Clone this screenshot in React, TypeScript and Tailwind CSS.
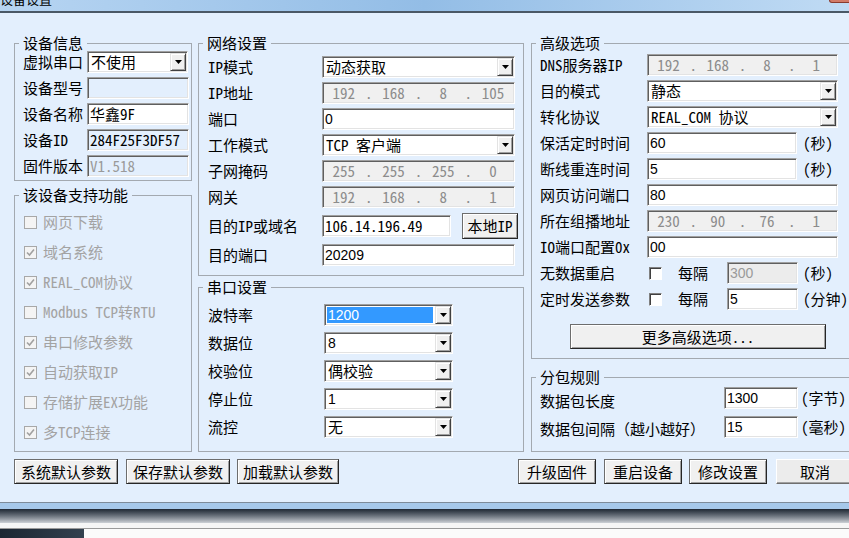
import React from 'react';

const MONO = "font-['Noto_Sans_Mono_CJK_SC','Noto_Sans_CJK_SC',sans-serif]";
const SANS = "font-['Liberation_Sans','DejaVu_Sans',sans-serif] text-[14px]";
const SUNKEN =
  'border border-t-[#a0a0a0] border-l-[#a0a0a0] border-b-white border-r-white shadow-[inset_1px_1px_0_#5f5f5f,inset_-1px_-1px_0_#e3e3e3] p-[1px]';
const RAISED =
  'border border-t-[#6d6d6d] border-l-[#6d6d6d] border-b-[#262626] border-r-[#262626] bg-[#f0f0f0] shadow-[inset_1px_1px_0_#fff,inset_-1px_-1px_0_#a0a0a0]';
const RAISED_SOFT =
  'border border-t-white border-l-white border-b-[#6f6f6f] border-r-[#6f6f6f] bg-[#ececec] shadow-[inset_-1px_-1px_0_#a0a0a0]';

const Arrow = () => (
  <svg width="7" height="4" viewBox="0 0 7 4">
    <path d="M0 0h7L3.5 4z" fill="#000" />
  </svg>
);

function Combo({
  value,
  className = '',
  sans = false,
  highlight = false,
}: {
  value: string;
  className?: string;
  sans?: boolean;
  highlight?: boolean;
}) {
  return (
    <div className={`flex h-[22px] shrink-0 bg-white ${SUNKEN} ${className}`}>
      <div className="flex min-w-0 flex-1 py-[1px] pl-[1px] pr-[2px]">
        <span
          className={`flex flex-1 items-center whitespace-pre pl-[1px] ${highlight ? 'bg-[#3399ff] text-white' : ''} ${sans ? SANS : ''}`}
        >
          {value}
        </span>
      </div>
      <div className="flex w-[16px] items-center justify-center border border-t-[#e3e3e3] border-l-[#e3e3e3] border-b-[#404040] border-r-[#404040] bg-[#f0f0f0] shadow-[inset_1px_1px_0_#fff,inset_-1px_-1px_0_#a0a0a0]">
        <Arrow />
      </div>
    </div>
  );
}

function Edit({
  value = '',
  className = '',
  bg = 'bg-white',
  sans = false,
  gray = false,
}: {
  value?: string;
  className?: string;
  bg?: string;
  sans?: boolean;
  gray?: boolean;
}) {
  return (
    <div
      className={`flex h-[22px] shrink-0 items-center whitespace-pre pl-[2px] ${SUNKEN} ${bg} ${sans ? SANS : ''} ${gray ? 'text-[#9a9a9a]' : 'text-black'} ${className}`}
    >
      {value}
    </div>
  );
}

function IpBox({ parts, className = '' }: { parts: string[]; className?: string }) {
  return (
    <div className={`flex h-[22px] shrink-0 items-center bg-[#f0f0f0] text-[#8c8c8c] ${SUNKEN} ${className}`}>
      {parts.map((p, i) => (
        <React.Fragment key={i}>
          {i > 0 && <span className="w-[10px] text-center">.</span>}
          <span className="flex-1 text-center">{p}</span>
        </React.Fragment>
      ))}
    </div>
  );
}

function Check({ checked = false, disabled = false }: { checked?: boolean; disabled?: boolean }) {
  return (
    <span
      className={`flex h-[13px] w-[13px] shrink-0 items-center justify-center ${
        disabled
          ? 'border border-[#a8a8a8] bg-[#f4f4f4]'
          : 'border border-t-[#808080] border-l-[#808080] border-b-white border-r-white bg-white shadow-[inset_1px_1px_0_#404040]'
      }`}
    >
      {checked && (
        <svg width="9" height="9" viewBox="0 0 9 9">
          <path d="M1 4.5 3.5 7 8 1.5" stroke="#a0a0a0" strokeWidth="1.6" fill="none" />
        </svg>
      )}
    </span>
  );
}

function Group({
  title,
  className = '',
  children,
}: {
  title: string;
  className?: string;
  children: React.ReactNode;
}) {
  return (
    <fieldset className={`min-w-0 border border-[#a3a9b0] ${className}`}>
      <legend className="ml-[4px] h-[16px] px-[4px] leading-[16px]">{title}</legend>
      {children}
    </fieldset>
  );
}

const Btn = ({ label, className = '', soft = false }: { label: string; className?: string; soft?: boolean }) => (
  <button
    type="button"
    className={`flex h-[25px] shrink-0 items-center justify-center text-black ${soft ? RAISED_SOFT : RAISED} ${className}`}
  >
    {label}
  </button>
);

const features: [string, boolean][] = [
  ['网页下载', false],
  ['域名系统', true],
  ['REAL_COM协议', true],
  ['Modbus TCP转RTU', false],
  ['串口修改参数', true],
  ['自动获取IP', true],
  ['存储扩展EX功能', false],
  ['多TCP连接', true],
];

export default function App() {
  return (
    <div className={`flex h-[538px] w-[849px] flex-col overflow-hidden bg-[#e3effd] text-[15px] leading-[16px] text-black ${MONO}`}>
      {/* title bar, mostly cut off */}
      <div className="flex h-[11px] shrink-0 overflow-hidden bg-linear-to-r from-[#b7d5f2] via-[#93bde6] to-[#c0dbf4]">
        <span className="-mt-[9px] text-[13px] leading-[16px]">设备设置</span>
        <div className="ml-auto mr-[-4px] h-[3px] w-[24px] rounded-bl-[4px] border border-t-0 border-[#8a3b2e] bg-[#d27b68]" />
      </div>
      <div className="h-[2px] shrink-0 bg-[#4a5866]" />

      <div className="flex h-[489px] shrink-0 flex-col pl-[14px] pt-[22px]">
        <div className="flex">
          {/* left column */}
          <div className="flex w-[178px] shrink-0 flex-col">
            <Group title="设备信息">
              <div className="flex flex-col gap-[4px] pb-[3px] pl-[8px]">
                <div className="flex h-[22px] items-center">
                  <span className="w-[64px] shrink-0">虚拟串口</span>
                  <Combo value="不使用" className="w-[101px]" />
                </div>
                <div className="flex h-[22px] items-center">
                  <span className="w-[64px] shrink-0">设备型号</span>
                  <Edit className="w-[102px]" bg="bg-[#e3effd]" />
                </div>
                <div className="flex h-[22px] items-center">
                  <span className="w-[64px] shrink-0">设备名称</span>
                  <Edit value="华鑫9F" className="w-[102px]" />
                </div>
                <div className="flex h-[22px] items-center">
                  <span className="w-[64px] shrink-0">设备ID</span>
                  <Edit value="284F25F3DF57" className="w-[102px] overflow-hidden" bg="bg-[#e3effd]" />
                </div>
                <div className="flex h-[22px] items-center">
                  <span className="w-[64px] shrink-0">固件版本</span>
                  <Edit value="V1.518" className="w-[102px]" bg="bg-[#e3effd]" gray />
                </div>
              </div>
            </Group>

            <Group title="该设备支持功能" className="mt-[6px]">
              <div className="flex flex-col pb-[4px] pl-[9px] pt-[4px] text-[#a3a3a3]">
                {features.map(([name, on]) => (
                  <div key={name} className="flex h-[30px] items-center gap-[6px]">
                    <Check checked={on} disabled />
                    <span className="whitespace-pre">{name}</span>
                  </div>
                ))}
              </div>
            </Group>
          </div>

          {/* middle column */}
          <div className="ml-[6px] flex w-[326px] shrink-0 flex-col">
            <Group title="网络设置">
              <div className="flex flex-col gap-[4px] pb-[9px] pl-[9px] pt-[5px]">
                <div className="flex h-[22px] items-center">
                  <span className="w-[114px] shrink-0">IP模式</span>
                  <Combo value="动态获取" className="w-[193px]" />
                </div>
                <div className="flex h-[22px] items-center">
                  <span className="w-[114px] shrink-0">IP地址</span>
                  <IpBox parts={['192', '168', '8', '105']} className="w-[193px]" />
                </div>
                <div className="flex h-[22px] items-center">
                  <span className="w-[114px] shrink-0">端口</span>
                  <Edit value="0" className="w-[193px]" sans />
                </div>
                <div className="flex h-[22px] items-center">
                  <span className="w-[114px] shrink-0">工作模式</span>
                  <Combo value="TCP 客户端" className="w-[193px]" />
                </div>
                <div className="flex h-[22px] items-center">
                  <span className="w-[114px] shrink-0">子网掩码</span>
                  <IpBox parts={['255', '255', '255', '0']} className="w-[193px]" />
                </div>
                <div className="flex h-[22px] items-center">
                  <span className="w-[114px] shrink-0">网关</span>
                  <IpBox parts={['192', '168', '8', '1']} className="w-[193px]" />
                </div>
                <div className="mt-[1px] flex h-[26px] items-center">
                  <span className="w-[114px] shrink-0">目的IP或域名</span>
                  <Edit value="106.14.196.49" className="w-[129px]" />
                  <Btn label="本地IP" className="ml-[11px] h-[26px] w-[56px]" />
                </div>
                <div className="mt-[1px] flex h-[22px] items-center">
                  <span className="w-[114px] shrink-0">目的端口</span>
                  <Edit value="20209" className="w-[193px]" sans />
                </div>
              </div>
            </Group>

            <Group title="串口设置" className="mt-[3px]">
              <div className="flex flex-col gap-[6px] pb-[13px] pl-[9px] pt-[9px]">
                <div className="flex h-[22px] items-center">
                  <span className="w-[116px] shrink-0">波特率</span>
                  <Combo value="1200" className="w-[129px]" sans highlight />
                </div>
                <div className="flex h-[22px] items-center">
                  <span className="w-[116px] shrink-0">数据位</span>
                  <Combo value="8" className="w-[129px]" sans />
                </div>
                <div className="flex h-[22px] items-center">
                  <span className="w-[116px] shrink-0">校验位</span>
                  <Combo value="偶校验" className="w-[129px]" />
                </div>
                <div className="flex h-[22px] items-center">
                  <span className="w-[116px] shrink-0">停止位</span>
                  <Combo value="1" className="w-[129px]" sans />
                </div>
                <div className="flex h-[22px] items-center">
                  <span className="w-[116px] shrink-0">流控</span>
                  <Combo value="无" className="w-[129px]" />
                </div>
              </div>
            </Group>
          </div>

          {/* right column */}
          <div className="ml-[7px] flex w-[330px] shrink-0 flex-col">
            <Group title="高级选项">
              <div className="flex flex-col pb-[9px] pl-[8px] pt-[3px]">
                <div className="flex flex-col gap-[4px]">
                  <div className="flex h-[22px] items-center">
                    <span className="w-[107px] shrink-0">DNS服务器IP</span>
                    <IpBox parts={['192', '168', '8', '1']} className="w-[191px]" />
                  </div>
                  <div className="flex h-[22px] items-center">
                    <span className="w-[107px] shrink-0">目的模式</span>
                    <Combo value="静态" className="w-[191px]" />
                  </div>
                  <div className="flex h-[22px] items-center">
                    <span className="w-[107px] shrink-0">转化协议</span>
                    <Combo value="REAL_COM 协议" className="w-[191px]" />
                  </div>
                  <div className="flex h-[22px] items-center">
                    <span className="w-[107px] shrink-0">保活定时时间</span>
                    <Edit value="60" className="w-[150px]" sans />
                    <span className="ml-[6px]">(秒)</span>
                  </div>
                  <div className="flex h-[22px] items-center">
                    <span className="w-[107px] shrink-0">断线重连时间</span>
                    <Edit value="5" className="w-[150px]" sans />
                    <span className="ml-[6px]">(秒)</span>
                  </div>
                  <div className="flex h-[22px] items-center">
                    <span className="w-[107px] shrink-0">网页访问端口</span>
                    <Edit value="80" className="w-[191px]" sans />
                  </div>
                  <div className="flex h-[22px] items-center">
                    <span className="w-[107px] shrink-0">所在组播地址</span>
                    <IpBox parts={['230', '90', '76', '1']} className="w-[191px]" />
                  </div>
                  <div className="flex h-[22px] items-center">
                    <span className="w-[107px] shrink-0">IO端口配置0x</span>
                    <Edit value="00" className="w-[191px]" sans />
                  </div>
                  <div className="flex h-[22px] items-center">
                    <span className="w-[107px] shrink-0">无数据重启</span>
                    <span className="ml-[2px]">
                      <Check />
                    </span>
                    <span className="ml-[16px] w-[30px] shrink-0">每隔</span>
                    <Edit value="300" className="ml-[19px] w-[71px]" bg="bg-[#ececec]" sans gray />
                    <span className="ml-[5px]">(秒)</span>
                  </div>
                  <div className="flex h-[22px] items-center">
                    <span className="w-[107px] shrink-0">定时发送参数</span>
                    <span className="ml-[2px]">
                      <Check />
                    </span>
                    <span className="ml-[16px] w-[30px] shrink-0">每隔</span>
                    <Edit value="5" className="ml-[19px] w-[71px]" sans />
                    <span className="ml-[5px] whitespace-pre">(分钟)</span>
                  </div>
                </div>
                <Btn label="更多高级选项..." className="ml-[30px] mt-[14px] w-[256px]" />
              </div>
            </Group>

            <Group title="分包规则" className="mt-[10px]">
              <div className="flex flex-col gap-[7px] pb-[13px] pl-[8px] pt-[2px]">
                <div className="flex h-[22px] items-center">
                  <span className="w-[184px] shrink-0 pt-[6px]">数据包长度</span>
                  <Edit value="1300" className="w-[74px]" sans />
                  <span className="ml-[3px]">(字节)</span>
                </div>
                <div className="flex h-[22px] items-center">
                  <span className="w-[184px] shrink-0 pt-[4px]">数据包间隔（越小越好）</span>
                  <Edit value="15" className="w-[74px]" sans />
                  <span className="ml-[3px]">(毫秒)</span>
                </div>
              </div>
            </Group>
          </div>
        </div>

        {/* bottom buttons */}
        <div className="mt-[7px] flex">
          <Btn label="系统默认参数" className="w-[104px]" />
          <Btn label="保存默认参数" className="ml-[8px] w-[104px]" />
          <Btn label="加载默认参数" className="ml-[7px] w-[102px]" />
          <Btn label="升级固件" className="ml-[179px] w-[78px]" />
          <Btn label="重启设备" className="ml-[8px] w-[78px]" />
          <Btn label="修改设置" className="ml-[7px] w-[78px]" />
          <Btn label="取消" className="ml-[9px] w-[78px]" soft />
        </div>
      </div>

      {/* lower window frame and taskbar edge */}
      <div className="h-[1px] shrink-0 bg-[#7d8b99]" />
      <div className="h-[6px] shrink-0 bg-[#a6c8ea]" />
      <div className="h-[14px] shrink-0 bg-linear-to-b from-[#1f2833] via-[#6c747e] to-[#cdd1d6]" />
      <div className="h-[5px] shrink-0 bg-[#f6f6f6]" />
      <div className="h-[1px] shrink-0 bg-[#9a9a9a]" />
      <div className="flex h-[9px] shrink-0 bg-[#fbfbfb]">
        <div className="w-[84px] bg-linear-to-r from-[#1c2632] to-[#33414f]" />
      </div>
    </div>
  );
}
